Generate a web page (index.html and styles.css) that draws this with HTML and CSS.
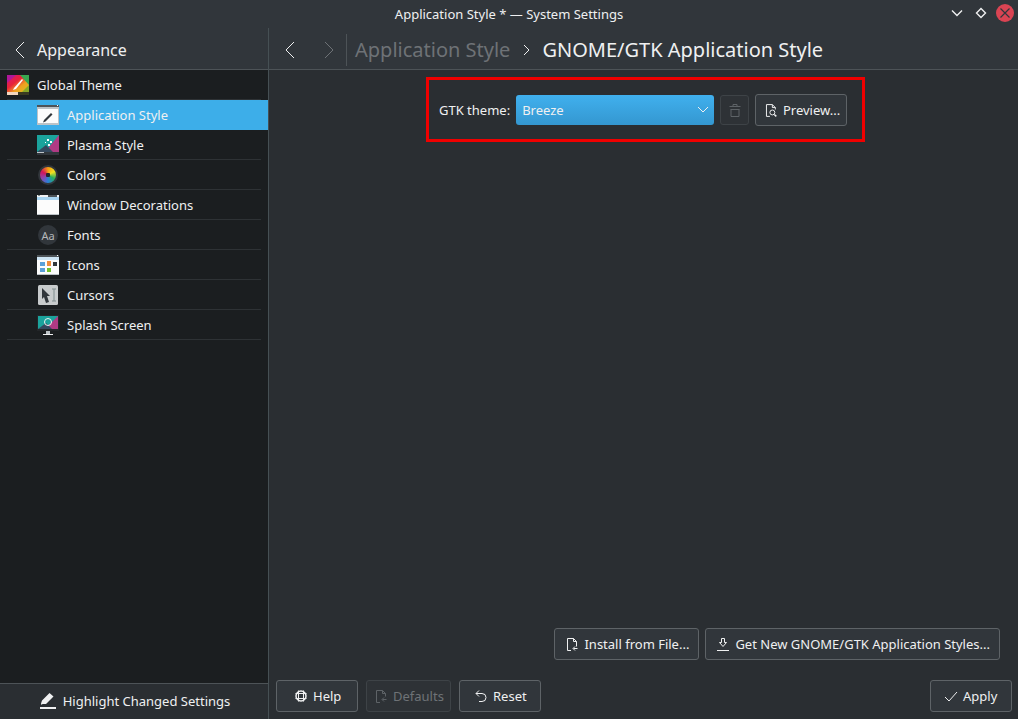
FILE: index.html
```html
<!DOCTYPE html>
<html lang="en">
<head>
    <meta charset="UTF-8">
    <title>Application Style * — System Settings</title>
    <link rel="stylesheet" href="styles.css">
</head>
<body>
    <!-- Window title bar -->
    <div class="titlebar">
        <span class="title">Application Style * — System Settings</span>
        <div class="win-buttons">
            <svg width="12" height="12" viewBox="0 0 12 12" class="line heavy"><path d="M1 3.500l5 5 5-5"/></svg>
            <svg width="12" height="12" viewBox="0 0 12 12" class="line heavy"><path d="M6 1.500L10.500 6 6 10.500 1.500 6z"/></svg>
            <svg width="18" height="18" viewBox="0 0 18 18" class="close"><circle cx="9" cy="9" r="9" fill="#da4453"/><path d="M4.500 4.500l9 9M13.500 4.500l-9 9" stroke="#31363b" stroke-width="1.200" fill="none"/></svg>
        </div>
    </div>

    <div class="window">
        <!-- Sidebar -->
        <aside class="sidebar">
            <div class="side-head">
                <svg width="12" height="18" viewBox="0 0 12 18" class="line"><path d="M10 1L2 9l8 8"/></svg>
                <span>Appearance</span>
            </div>
            <div class="side-list">
                <div class="item top">
                    <svg class="icon" width="22" height="20" viewBox="0 0 22 20">
                        <defs>
                            <linearGradient id="gt" x1="0" y1="0" x2="1" y2="1"><stop offset="0" stop-color="#d4147a"/><stop offset="0.4" stop-color="#e8223a"/><stop offset="0.65" stop-color="#f0a020"/><stop offset="1" stop-color="#d8c020"/></linearGradient>
                        </defs>
                        <rect width="22" height="17" fill="url(#gt)"/>
                        <path d="M0 0h9L0 8z" fill="#b0189a"/>
                        <path d="M13 0h9v10z" fill="#38a850"/>
                        <path d="M15 17l7-7v7z" fill="#88a828"/>
                        <rect y="17" width="22" height="3" fill="#3a3a22"/><rect y="17" width="11" height="3" fill="#f2d6c0"/>
                        <path d="M7 13l8-9 1 1-7 9-3 1z" fill="#fff"/>
                    </svg>
                    <span>Global Theme</span>
                </div>
                <div class="item selected">
                    <svg class="icon" width="22" height="20" viewBox="0 0 22 20">
                        <rect width="22" height="20" fill="#bdc3c7"/><rect width="22" height="2" fill="#4d5357"/><rect x="20" width="1" height="1" fill="#fff"/>
                        <rect x="1" y="4" width="20" height="14" fill="#fcfcfc"/>
                        <path d="M7 15l7-7 1.500 1.500-7 7-2.500 1z" fill="#31363b"/>
                    </svg>
                    <span>Application Style</span>
                </div>
                <div class="item">
                    <svg class="icon" width="22" height="20" viewBox="0 0 22 20">
                        <rect width="22" height="17" fill="#1ba39c"/><path d="M22 0v17H8z" fill="#b03a84"/><path d="M0 17l9-7 7 7z" fill="#34495e"/>
                        <rect y="17" width="22" height="3" fill="#31363b"/><rect y="17" width="7" height="1" fill="#bdc3c7"/>
                        <path d="M10 4h2v2h-2zM13 6h2v2h-2zM11 9h2v2h-2zM8 7h1v1H8z" fill="#fff"/>
                    </svg>
                    <span>Plasma Style</span>
                </div>
                <div class="item">
                    <div class="color-icon"></div>
                    <span>Colors</span>
                </div>
                <div class="item">
                    <svg class="icon" width="22" height="20" viewBox="0 0 22 20">
                        <rect width="22" height="20" fill="#fcfcfc"/>
                        <rect width="22" height="2" fill="#eff0f1"/><rect x="11" width="9" height="2" fill="#4d5357"/><rect x="1" width="2" height="1" fill="#7f8c8d"/>
                        <rect y="2" width="22" height="3" fill="#a8d4f0"/>
                        <rect y="19" width="22" height="1" fill="#bdc3c7"/>
                    </svg>
                    <span>Window Decorations</span>
                </div>
                <div class="item">
                    <div class="font-icon">Aa</div>
                    <span>Fonts</span>
                </div>
                <div class="item">
                    <svg class="icon" width="22" height="20" viewBox="0 0 22 20">
                        <rect width="22" height="20" fill="#fcfcfc"/><rect width="22" height="2" fill="#4d5357"/><rect x="20" width="1" height="1" fill="#fff"/>
                        <rect y="2" width="22" height="3" fill="#cfe6f5"/><rect y="19" width="22" height="1" fill="#bdc3c7"/>
                        <rect x="3" y="7" width="5" height="4" fill="#5aa0d8"/><rect x="10" y="6" width="4" height="5" fill="#f08c3c"/><rect x="16" y="7" width="4" height="4" fill="#31363b"/>
                        <rect x="3" y="13" width="5" height="4" fill="#5aa0d8"/><rect x="10" y="13" width="4" height="4" fill="#72c02c"/>
                    </svg>
                    <span>Icons</span>
                </div>
                <div class="item">
                    <svg class="icon" width="22" height="20" viewBox="0 0 22 20">
                        <rect x="1" width="20" height="20" rx="1.500" fill="#c8cbcc"/>
                        <path d="M5 3l8 8h-3l2 6-3 1-2-6-2 2z" fill="#31363b"/>
                        <path d="M15 4h4M15 16h4M17 4v12" stroke="#7f8c8d" fill="none"/>
                    </svg>
                    <span>Cursors</span>
                </div>
                <div class="item">
                    <svg class="icon" width="22" height="20" viewBox="0 0 22 20">
                        <rect width="22" height="16" fill="#232629"/><rect x="1" y="1" width="20" height="13" fill="#1ba39c"/><path d="M21 1v13H8z" fill="#b03a84"/><path d="M1 14l8-6 6 6z" fill="#34495e"/>
                        <circle cx="11" cy="7" r="3.500" fill="none" stroke="#eff0f1"/>
                        <rect x="9" y="16" width="4" height="3" fill="#bdc3c7"/><rect x="6" y="19" width="10" height="1" fill="#eff0f1"/>
                    </svg>
                    <span>Splash Screen</span>
                </div>
            </div>
            <div class="side-foot">
                <svg width="18" height="17" viewBox="0 0 18 17"><path d="M2 11.500l1-3L10.500 1l4 3.500L7 12H3.500L2.500 13z" fill="#eff0f1"/><rect x="1" y="15" width="16" height="2" fill="#eff0f1"/></svg>
                <span>Highlight Changed Settings</span>
            </div>
        </aside>

        <!-- Page content -->
        <main class="main">
            <div class="crumbs">
                <svg width="12" height="16" viewBox="0 0 12 16" class="line nav-back"><path d="M10 0L2 8l8 8"/></svg>
                <svg width="12" height="16" viewBox="0 0 12 16" class="line dim nav-fwd"><path d="M2 0l8 8-8 8"/></svg>
                <div class="crumb-sep"></div>
                <span class="crumb dim-text">Application Style</span>
                <svg width="8" height="12" viewBox="0 0 8 12" class="line crumb-arrow"><path d="M1 1l5 5-5 5"/></svg>
                <span class="crumb">GNOME/GTK Application Style</span>
            </div>

            <div class="content">
                <div class="highlight">
                    <label>GTK theme:</label>
                    <div class="combo">
                        <span>Breeze</span>
                        <svg width="12" height="8" viewBox="0 0 12 8" class="line"><path d="M1 1l5 5 5-5"/></svg>
                    </div>
                    <button class="btn square" disabled>
                        <svg width="14" height="14" viewBox="0 0 14 14" class="line"><path d="M1.500 3.500h11M5 3.500v-2h4v2M2.500 6.500h9M3 6.500v7h8v-7"/></svg>
                    </button>
                    <button class="btn preview">
                        <svg width="14" height="14" viewBox="0 0 14 14" class="line"><path d="M6 13.500H2.500v-12h6l3 3v2M8.500 1.500v3h3"/><circle cx="8.500" cy="9.500" r="2.500"/><path d="M10.500 11.500l2 2" stroke-width="1.500"/></svg>
                        Preview...
                    </button>
                </div>

                <div class="install-row">
                    <button class="btn">
                        <svg width="14" height="14" viewBox="0 0 14 14" class="line"><path d="M6 13.500H2.500v-12h6l3 3v5M8.500 1.500v3h3M12.500 11.500h-4M10 9.500l-2 2 2 2"/></svg>
                        Install from File...
                    </button>
                    <button class="btn">
                        <svg width="14" height="14" viewBox="0 0 14 14" class="line"><path d="M1 13.500h12M5.500 1.500v4h-2l3.500 4 3.500-4h-2v-4z"/></svg>
                        Get New GNOME/GTK Application Styles...
                    </button>
                </div>
            </div>

            <div class="actions">
                <button class="btn help">
                    <svg width="14" height="14" viewBox="0 0 14 14" class="line"><circle cx="7" cy="7" r="5" stroke-width="1.500"/><path d="M4.500 1.500v11M9.500 1.500v11M1.500 4.500h11M1.500 9.500h11"/></svg>
                    Help
                </button>
                <button class="btn defaults" disabled>
                    <svg width="14" height="14" viewBox="0 0 14 14" class="line"><path d="M6 13.500H2.500v-12h6l3 3v3M8.500 1.500v3h3M12.500 10.500h-4M10 8.500l-2 2 2 2"/></svg>
                    Defaults
                </button>
                <button class="btn reset">
                    <svg width="14" height="14" viewBox="0 0 14 14" class="line"><path d="M5 1.500L2 4.500l3 3M2 4.500h6a4 4 0 0 1 0 8H5"/></svg>
                    Reset
                </button>
                <button class="btn apply">
                    <svg width="14" height="14" viewBox="0 0 14 14" class="line"><path d="M1 8l4 4 8-9"/></svg>
                    Apply
                </button>
            </div>
        </main>
    </div>
</body>
</html>
```

FILE: styles.css
```css
* {
    box-sizing: border-box;
}

body {
    font-family: "Noto Sans", sans-serif;
    font-size: 13px;
    margin: 0;
    height: 719px;
    width: 1018px;
    overflow: hidden;
    color: #eff0f1;
    background-color: #2a2e32;
    display: flex;
    flex-direction: column;
}

.line {
    fill: none;
    stroke: #eff0f1;
    stroke-width: 1;
}

.line.heavy {
    stroke-width: 1.4;
}

.line.dim {
    stroke: #6e7276;
}

/* Title bar */
.titlebar {
    height: 28px;
    flex-shrink: 0;
    background-color: #31363b;
    display: flex;
    align-items: center;
    justify-content: center;
    position: relative;
}

.win-buttons {
    position: absolute;
    top: 4px;
    right: 4px;
    display: flex;
    align-items: center;
    gap: 12px;
}

.win-buttons .close {
    margin-left: -3px;
}

.window {
    flex: 1;
    display: flex;
    min-height: 0;
}

/* Sidebar */
.sidebar {
    width: 269px;
    flex-shrink: 0;
    display: flex;
    flex-direction: column;
    background-color: #1b1e20;
    border-right: 1px solid #465054;
}

.side-head {
    height: 42px;
    flex-shrink: 0;
    background-color: #31363b;
    border-bottom: 1px solid #4d5357;
    display: flex;
    align-items: center;
    padding-left: 14px;
    padding-top: 2px;
    gap: 11px;
    font-size: 16px;
}

.side-list {
    flex: 1;
}

.item {
    height: 30px;
    display: flex;
    align-items: center;
    padding-left: 37px;
    gap: 8px;
    position: relative;
}

.item::after {
    content: "";
    position: absolute;
    left: 7px;
    right: 7px;
    bottom: 0;
    height: 1px;
    background-color: #2e3235;
}

.item.top {
    padding-left: 7px;
}

.item.selected {
    background-color: #3daee9;
}

.item.selected::after {
    display: none;
}

.icon {
    flex-shrink: 0;
}

.color-icon {
    width: 20px;
    height: 20px;
    margin: 0 1px;
    border-radius: 50%;
    background:
        radial-gradient(circle, #232629 0 2px, transparent 2.500px),
        conic-gradient(#f39c12, #f1e020, #27ae60, #2980d9, #8e44ad, #d4145a, #f39c12);
    border: 2px solid #31363b;
}

.font-icon {
    width: 20px;
    height: 20px;
    margin: 0 1px;
    border-radius: 50%;
    background-color: #31363b;
    color: #b5b8ba;
    font-size: 11px;
    display: flex;
    align-items: center;
    justify-content: center;
}

.side-foot {
    height: 36px;
    flex-shrink: 0;
    background-color: #2a2e32;
    border-top: 1px solid #4d5357;
    display: flex;
    align-items: center;
    justify-content: center;
    gap: 6px;
    padding: 0 0 2px 1px;
}

/* Main column */
.main {
    flex: 1;
    min-width: 0;
    display: flex;
    flex-direction: column;
}

.crumbs {
    height: 42px;
    flex-shrink: 0;
    background-color: #31363b;
    border-bottom: 1px solid #4d5357;
    display: flex;
    align-items: center;
    padding-top: 2px;
    padding-left: 15px;
}

.nav-fwd {
    margin-left: 27px;
}

.crumb-sep {
    width: 1px;
    height: 32px;
    background-color: #4d5357;
    margin: 0 8px 0 11px;
}

.crumb {
    font-size: 20px;
}

.dim-text {
    color: #6e7276;
    margin-right: 13px;
}

.crumb-arrow {
    margin-right: 11px;
}

.content {
    flex: 1;
    min-height: 0;
    display: flex;
    flex-direction: column;
    align-items: center;
    padding: 7px 18px 20px 7px;
}

/* Red highlight around the theme row */
.highlight {
    width: 439px;
    height: 65px;
    margin-left: 15px;
    border: 3px solid #f00000;
    display: flex;
    align-items: center;
    padding: 0 0 0 10px;
}

.highlight label {
    margin-right: 6px;
}

.combo {
    width: 198px;
    height: 30px;
    border-radius: 3px;
    background: linear-gradient(#40b0ee, #3497d0);
    padding: 0 5px 0 6px;
    display: flex;
    align-items: center;
    justify-content: space-between;
    margin-right: 6px;
}

.btn {
    font: inherit;
    color: #eff0f1;
    height: 32px;
    background-color: #31363b;
    border: 1px solid #5e6367;
    border-radius: 3px;
    display: flex;
    align-items: center;
    gap: 5px;
    padding: 0 9px 0 10px;
    white-space: nowrap;
}

.btn:disabled {
    color: #6e7276;
    background-color: #2e3236;
    border-color: #3e4347;
}

.btn:disabled .line {
    stroke: #5e6367;
}

.btn.square {
    width: 29px;
    height: 30px;
    padding: 0;
    justify-content: center;
    margin-right: 6px;
}

.btn.preview {
    width: 92px;
    padding: 0 6px 0 8px;
}

.install-row {
    margin-top: auto;
    align-self: flex-end;
    display: flex;
    gap: 6px;
}

.actions {
    flex-shrink: 0;
    display: flex;
    gap: 8px;
    padding: 0 6px 7px 7px;
}

.help {
    width: 82px;
    padding: 0 0 0 17px;
}

.defaults {
    width: 85px;
    padding: 0 0 0 7px;
}

.reset {
    width: 82px;
    padding: 0 0 0 14px;
}

.apply {
    margin-left: auto;
    width: 82px;
    padding: 0 0 0 13px;
}
```
